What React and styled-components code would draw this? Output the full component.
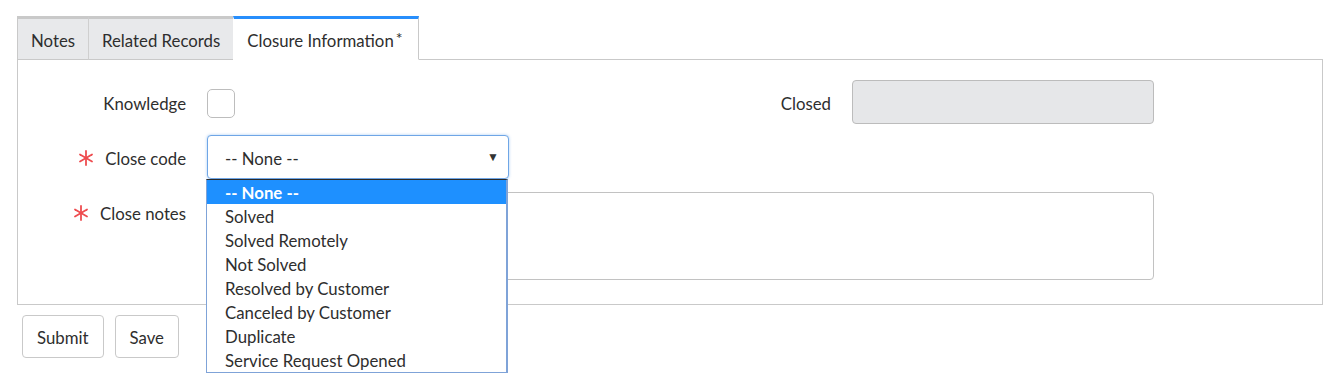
import styled, { createGlobalStyle } from 'styled-components'

const GlobalStyle = createGlobalStyle`
  html, body {
    margin: 0;
    background: #fff;
    font-family: Lato, "Liberation Sans", sans-serif;
    color: #2e2e2e;
  }
`

const Page = styled.div`
  padding: 16px 20px 0 17px;
  min-height: 387px;
  box-sizing: border-box;
`

const TabBar = styled.div`
  display: flex;
  height: 44px;
`

const Tab = styled.div`
  display: flex;
  align-items: center;
  padding: 2px 13px 0 13px;
  font-size: 16.8px;
  box-sizing: border-box;
  border-top: 3px solid ${p => (p.$active ? '#278efc' : '#c9c9c9')};
  border-left: 1px solid ${p => (p.$first ? '#c9c9c9' : p.$active ? 'transparent' : '#cfcfcf')};
  border-right: ${p => (p.$active ? '1px solid #c9c9c9' : 'none')};
  border-bottom: 1px solid ${p => (p.$active ? '#fff' : '#c9c9c9')};
  background: ${p => (p.$active ? '#fff' : '#e8e9eb')};
  position: relative;
  z-index: 1;
  sup {
    font-size: 16px;
    margin-left: 2px;
    margin-right: 2px;
    position: relative;
    top: -3px;
  }
`

const Panel = styled.div`
  border: 1px solid #c9c9c9;
  margin-top: -1px;
  padding: 20px 0 24px 0;
  display: grid;
  grid-template-columns: 168px 302px 301px 302px;
  column-gap: 21px;
`

const Label = styled.div`
  display: flex;
  justify-content: flex-end;
  align-items: ${p => (p.$top ? 'flex-start' : 'center')};
  padding-top: ${p => (p.$top ? '10px' : '3px')};
  font-size: 16.8px;
  line-height: 24px;
  gap: 11px;
  margin-top: ${p => p.$mt || 0}px;
`

const Star = styled.svg`
  width: 16px;
  height: 16px;
  flex: none;
  margin-top: ${p => (p.$top ? '3px' : '-2px')};
`

const Field = styled.div`
  display: flex;
  align-items: center;
  height: ${p => (p.$tall ? '88px' : '44px')};
  margin-top: ${p => p.$mt || 0}px;
  grid-column: ${p => p.$span || 'auto'};
  position: relative;
`

const Checkbox = styled.div`
  width: 26px;
  height: 27px;
  margin-top: 2px;
  border: 1px solid #bdbdbd;
  border-radius: 5px;
  background: #fff;
`

const ReadOnly = styled.div`
  width: 100%;
  height: 100%;
  box-sizing: border-box;
  border: 1px solid #bcbcbc;
  border-radius: 4px;
  background: #e6e7e9;
`

const Select = styled.div`
  width: 100%;
  height: 100%;
  box-sizing: border-box;
  border: 1px solid #6fa6e6;
  border-radius: 4px;
  box-shadow: 0 0 3px rgba(60, 140, 230, 0.45);
  display: flex;
  align-items: center;
  justify-content: space-between;
  padding: 2px 9px 0 17px;
  font-size: 16.8px;
  background: #fff;
`

const Arrow = styled.span`
  font-size: 12px;
  color: #333;
  margin-top: -4px;
`

const Dropdown = styled.ul`
  position: absolute;
  left: -1px;
  top: 44px;
  width: 302px;
  box-sizing: border-box;
  margin: 0;
  padding: 0;
  list-style: none;
  background: #fff;
  border: 1px solid #7fa3d8;
  border-top: 1px solid #2b2b2b;
  border-right-width: 2px;
  z-index: 5;
`

const Option = styled.li`
  height: 24px;
  line-height: 26px;
  padding-left: 18px;
  font-size: 16.8px;
  background: ${p => (p.$selected ? '#1e90ff' : '#fff')};
  color: ${p => (p.$selected ? '#fff' : '#2e2e2e')};
  font-weight: ${p => (p.$selected ? 700 : 400)};
`

const TextArea = styled.div`
  width: 100%;
  height: 100%;
  box-sizing: border-box;
  border: 1px solid #c2c2c2;
  border-radius: 4px;
`

const Buttons = styled.div`
  display: flex;
  gap: 11px;
  margin: 10px 0 0 5px;
`

const Button = styled.button`
  height: 43px;
  padding: 2px 14px 0;
  border: 1px solid #c9c9c9;
  border-radius: 4px;
  background: #fff;
  font-family: inherit;
  font-size: 16.8px;
  color: #2e2e2e;
`

const options = [
  '-- None --',
  'Solved',
  'Solved Remotely',
  'Not Solved',
  'Resolved by Customer',
  'Canceled by Customer',
  'Duplicate',
  'Service Request Opened',
]

const RequiredStar = ({ top }) => (
  <Star viewBox="0 0 16 16" $top={top}>
    <g stroke="#ee4c4f" strokeWidth="1.8" strokeLinecap="round">
      <line x1="8" y1="1" x2="8" y2="15" />
      <line x1="2" y1="4.5" x2="14" y2="11.5" />
      <line x1="2" y1="11.5" x2="14" y2="4.5" />
    </g>
  </Star>
)

const App = () => {
  return (
    <Page>
      <GlobalStyle />
      <TabBar>
        <Tab $first>Notes</Tab>
        <Tab>Related Records</Tab>
        <Tab $active>Closure Information<sup>*</sup></Tab>
      </TabBar>
      <Panel>
        <Label>Knowledge</Label>
        <Field>
          <Checkbox />
        </Field>
        <Label>Closed</Label>
        <Field>
          <ReadOnly />
        </Field>

        <Label $mt={11}>
          <RequiredStar />
          Close code
        </Label>
        <Field $mt={11}>
          <Select>
            -- None --
            <Arrow>▼</Arrow>
          </Select>
          <Dropdown>
            {options.map((o, i) => (
              <Option key={o} $selected={i === 0}>{o}</Option>
            ))}
          </Dropdown>
        </Field>
        <div />
        <div />

        <Label $top $mt={13}>
          <RequiredStar top />
          Close notes
        </Label>
        <Field $tall $mt={13} $span="2 / 5">
          <TextArea />
        </Field>
      </Panel>
      <Buttons>
        <Button>Submit</Button>
        <Button>Save</Button>
      </Buttons>
    </Page>
  )
}

export default App
